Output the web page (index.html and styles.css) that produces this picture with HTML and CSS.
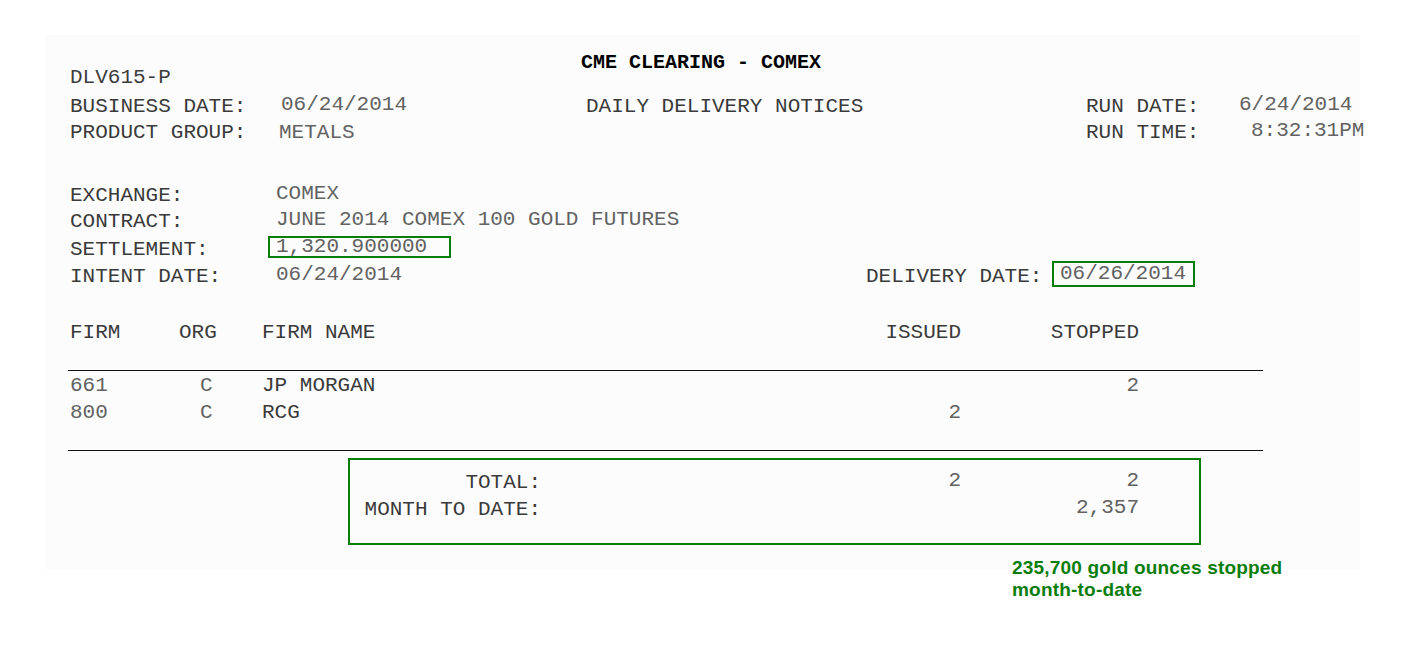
FILE: index.html
```html
<!DOCTYPE html>
<html>
<head>
<meta charset="utf-8">
<title>CME Clearing - COMEX Daily Delivery Notices</title>
<link rel="stylesheet" href="styles.css">
</head>
<body>
<div class="sheet">
  <div class="topbar">
    <div class="code">DLV615-P</div>
    <div class="title">CME CLEARING - COMEX</div>
  </div>

  <div class="row first">
    <div class="lbl w211">BUSINESS DATE:</div>
    <div class="val w305 hi">06/24/2014</div>
    <div class="lbl w500">DAILY DELIVERY NOTICES</div>
    <div class="lbl w153">RUN DATE:</div>
    <div class="val hi">6/24/2014</div>
  </div>
  <div class="row">
    <div class="lbl w209">PRODUCT GROUP:</div>
    <div class="val w807">METALS</div>
    <div class="lbl w165">RUN TIME:</div>
    <div class="val hi">8:32:31PM</div>
  </div>

  <div class="row gap-sec">
    <div class="lbl w206">EXCHANGE:</div>
    <div class="val hi">COMEX</div>
  </div>
  <div class="row">
    <div class="lbl w206">CONTRACT:</div>
    <div class="val hi">JUNE 2014 COMEX 100 GOLD FUTURES</div>
  </div>
  <div class="row settle">
    <div class="lbl w198">SETTLEMENT:</div>
    <div class="val box-settle">1,320.900000</div>
  </div>
  <div class="row intent">
    <div class="lbl w206">INTENT DATE:</div>
    <div class="val w590 hi">06/24/2014</div>
    <div class="lbl w186">DELIVERY DATE:</div>
    <div class="val box-deliv">06/26/2014</div>
  </div>

  <div class="row thead">
    <div class="lbl c-firm-h">FIRM</div>
    <div class="lbl c-org-h">ORG</div>
    <div class="lbl c-name">FIRM NAME</div>
    <div class="lbl c-iss">ISSUED</div>
    <div class="lbl c-stop">STOPPED</div>
  </div>
  <div class="rule rule-top"></div>
  <div class="row trow after-rule">
    <div class="val c-firm">661</div>
    <div class="val c-org">C</div>
    <div class="lbl c-name">JP MORGAN</div>
    <div class="val c-iss"></div>
    <div class="val c-stop">2</div>
  </div>
  <div class="row trow">
    <div class="val c-firm">800</div>
    <div class="val c-org">C</div>
    <div class="lbl c-name">RCG</div>
    <div class="val c-iss">2</div>
    <div class="val c-stop"></div>
  </div>
  <div class="rule rule-bottom"></div>

  <div class="totals">
    <div class="row trow">
      <div class="lbl t-lbl">TOTAL:</div>
      <div class="val t-iss hi">2</div>
      <div class="val c-stop hi">2</div>
    </div>
    <div class="row">
      <div class="lbl t-lbl">MONTH TO DATE:</div>
      <div class="val t-iss"></div>
      <div class="val c-stop hi">2,357</div>
    </div>
  </div>
</div>
<div class="caption">235,700 gold ounces stopped<br>month-to-date</div>
</body>
</html>
```

FILE: styles.css
```css
html, body {
  margin: 0;
  padding: 0;
  background: #ffffff;
}

body {
  padding-top: 35px;
  min-height: 610px;
  font-family: "Liberation Mono", "Courier New", monospace;
  font-size: 21px;
}

.sheet {
  margin-left: 45px;
  width: 1290px;
  height: 520px;
  padding: 15px 0 0 25px;
  background: #fcfcfc;
}

.topbar {
  display: flex;
  align-items: flex-start;
}

.code {
  flex: 0 0 511px;
  padding-top: 15px;
  line-height: 26px;
  color: #3c3c3c;
}

.title {
  font-weight: bold;
  font-size: 20px;
  line-height: 26px;
  color: #000;
}

.row {
  display: flex;
  align-items: flex-start;
  line-height: 26px;
  white-space: pre;
}

.row > div {
  flex-shrink: 0;
}

.row.first {
  margin-top: 3px;
}

.lbl {
  color: #3a3a3a;
}

.val {
  color: #626262;
}

.hi {
  margin-top: -2px;
}

.w153 { width: 153px; }
.w165 { width: 165px; }
.w186 { width: 186px; }
.w198 { width: 198px; }
.w206 { width: 206px; }
.w209 { width: 209px; }
.w211 { width: 211px; }
.w305 { width: 305px; }
.w500 { width: 500px; }
.w590 { width: 590px; }
.w807 { width: 807px; }

.gap-sec {
  margin-top: 37px;
}

.settle {
  margin-top: 2px;
}

.box-settle {
  margin-top: -1px;
  width: 173px;
  padding-left: 6px;
  line-height: 18px;
  border: 2px solid #0a7d0a;
}

.intent {
  margin-top: 1px;
}

.box-deliv {
  margin-top: -3px;
  width: 133px;
  padding-left: 6px;
  line-height: 22px;
  border: 2px solid #0a7d0a;
}

.thead {
  margin-top: 30px;
}

.c-firm-h { width: 109px; }
.c-org-h { width: 83px; }
.c-firm { width: 130px; }
.c-org { width: 62px; }
.c-name { width: 580px; }
.c-iss { width: 119px; text-align: right; }
.c-stop { width: 178px; text-align: right; }

.rule {
  margin-left: -2px;
  width: 1195px;
  height: 1px;
  background: #111;
}

.rule-top {
  margin-top: 24px;
}

.after-rule {
  margin-top: 2px;
}

.rule-bottom {
  margin-top: 23px;
}

.trow {
  height: 27px;
}

.totals {
  margin-top: 7px;
  margin-left: 278px;
  width: 835px;
  padding: 10px 0 20px 14px;
  border: 2px solid #0a7d0a;
}

.t-lbl {
  width: 177px;
  text-align: right;
}

.t-iss {
  width: 420px;
  text-align: right;
}

.caption {
  margin-top: -13px;
  margin-left: 1012px;
  font-family: "Liberation Sans", Arial, sans-serif;
  font-weight: bold;
  font-size: 19px;
  letter-spacing: 0.2px;
  line-height: 22px;
  color: #0a7d0a;
  white-space: nowrap;
}
```
